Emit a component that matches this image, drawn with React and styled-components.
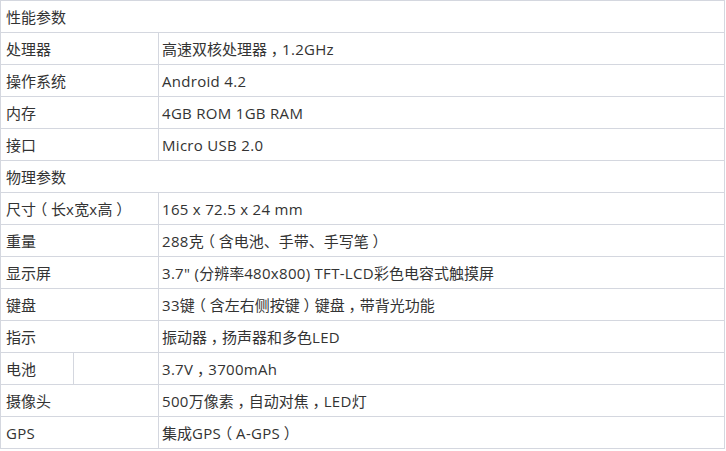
import React from "react";
import styled, { createGlobalStyle } from "styled-components";

const GlobalStyle = createGlobalStyle`
  html, body { margin: 0; padding: 0; background: #ffffff; }
  body { font-family: "Open Sans", "Noto Sans CJK SC", sans-serif; }
`;

const Page = styled.div`
  width: 726px;
  height: 451px;
  overflow: hidden;
  background: #ffffff;
`;

const Table = styled.table`
  border-collapse: collapse;
  table-layout: fixed;
  width: 725px;
  font-size: 15px;
  color: #333333;
`;

const Row = styled.tr``;

const Cell = styled.td`
  border: 1px solid #d4d7df;
  height: 31px;
  padding: 0 0 0 ${(p) => (p.$value ? "3px" : "5px")};
  vertical-align: middle;
  white-space: nowrap;
  line-height: 20px;
`;

const StubCell = styled.td`
  border: 1px solid #d4d7df;
  border-top: none;
  height: 0;
  padding: 0;
  line-height: 0;
  font-size: 0;
`;

const Latin = styled.span`
  letter-spacing: 0.3px;
`;

const Punct = styled.span`
  display: inline-block;
  font-feature-settings: "halt" 1;
  padding: 0 3.75px;
`;

function Rich({ text }) {
  const parts = text.match(/[\x00-\x7F]+|[，（）]|[^\x00-\x7F，（）]+/g) || [];
  return parts.map((p, i) => {
    if (/^[\x00-\x7F]+$/.test(p)) return <Latin key={i}>{p}</Latin>;
    if (/^[，（）]$/.test(p)) return <Punct key={i}>{p}</Punct>;
    return <React.Fragment key={i}>{p}</React.Fragment>;
  });
}

const perf = [
  ["处理器", "高速双核处理器，1.2GHz"],
  ["操作系统", "Android 4.2"],
  ["内存", "4GB ROM 1GB RAM"],
  ["接口", "Micro USB 2.0"],
];

const phys = [
  ["尺寸（长x宽x高）", "165 x 72.5 x 24 mm"],
  ["重量", "288克（含电池、手带、手写笔）"],
  ["显示屏", "3.7\" (分辨率480x800) TFT-LCD彩色电容式触摸屏"],
  ["键盘", "33键（含左右侧按键）键盘，带背光功能"],
  ["指示", "振动器，扬声器和多色LED"],
  ["电池", "3.7V，3700mAh", true],
  ["摄像头", "500万像素，自动对焦，LED灯"],
  ["GPS", "集成GPS（A-GPS）"],
];

function SpecRow({ label, value, split }) {
  return (
    <Row>
      {split ? (
        <>
          <Cell>
            <Rich text={label} />
          </Cell>
          <Cell />
        </>
      ) : (
        <Cell colSpan={2}>
          <Rich text={label} />
        </Cell>
      )}
      <Cell $value>
        <Rich text={value} />
      </Cell>
    </Row>
  );
}

export default function App() {
  return (
    <Page>
      <GlobalStyle />
      <Table>
        <colgroup>
          <col style={{ width: 73 }} />
          <col style={{ width: 85 }} />
          <col />
        </colgroup>
        <tbody>
          <Row>
            <StubCell />
            <StubCell />
            <StubCell />
          </Row>
          <Row>
            <Cell colSpan={3}>性能参数</Cell>
          </Row>
          {perf.map(([l, v]) => (
            <SpecRow key={l} label={l} value={v} />
          ))}
          <Row>
            <Cell colSpan={3}>物理参数</Cell>
          </Row>
          {phys.map(([l, v, s]) => (
            <SpecRow key={l} label={l} value={v} split={s} />
          ))}
        </tbody>
      </Table>
    </Page>
  );
}
